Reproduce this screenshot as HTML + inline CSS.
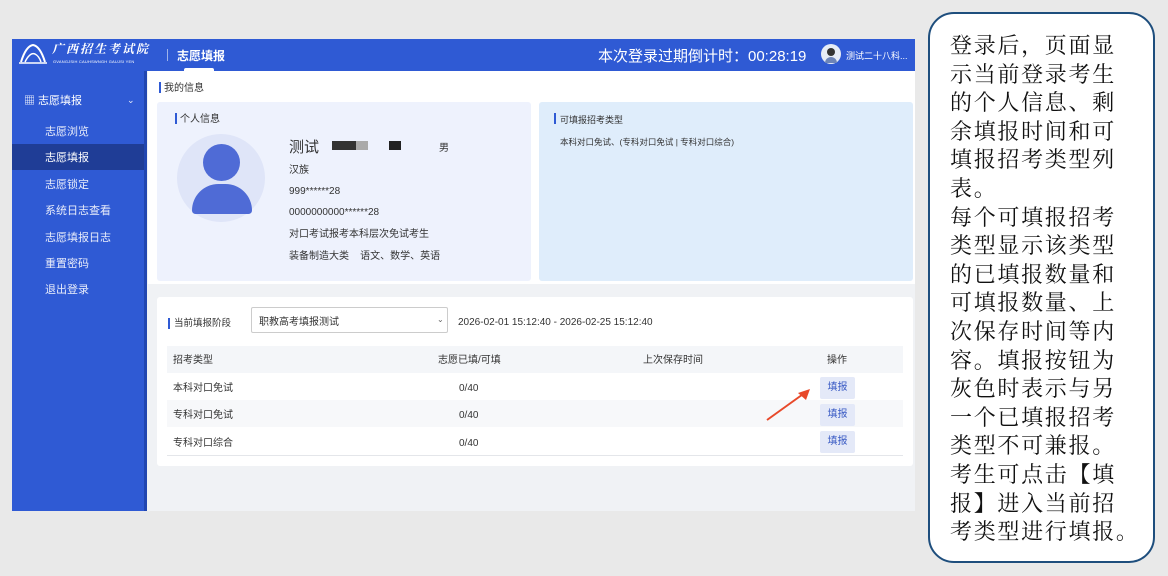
<!DOCTYPE html>
<html><head><meta charset="utf-8"><style>
*{margin:0;padding:0;box-sizing:border-box}
body{width:1168px;height:576px;background:#e9e9e9;position:relative;overflow:hidden;font-family:"Liberation Sans","Noto Sans CJK SC",sans-serif;color:#333}
.abs{position:absolute}
.shot{left:12px;top:39px;width:903px;height:472px;background:#f0f2f5;overflow:hidden}
.hdr{left:0;top:0;width:903px;height:32px;background:#2f5ad4;color:#fff}
.side{left:0;top:32px;width:135px;height:440px;background:#2f5ad4}
.side .strip{left:132px;top:0;width:3px;height:440px;background:#2146b0}
.mi{position:absolute;left:33px;font-size:11px;line-height:12px;color:#e8ecfa;margin-top:1px}
.card{background:#fff}
.t{font-size:10px;line-height:12px;color:#333;position:absolute;white-space:nowrap;margin-top:2px}
.bar{position:absolute;width:2px;height:11px;background:#2f5ad4}
.btn{position:absolute;width:35px;height:22px;background:#e4e9f8;color:#3a5bc4;font-size:10px;text-align:center;line-height:22px;border-radius:2px}
.note{left:928px;top:12px;width:227px;height:551px;border:2px solid #1e4e7d;border-radius:26px;background:#fff}
.note p{position:absolute;left:20px;top:17px;width:205px;white-space:nowrap;font-family:"Noto Serif CJK SC","Liberation Serif",serif;font-size:22px;line-height:28.6px;color:#111;letter-spacing:1.7px}
</style></head><body>
<div class="abs shot">
 <div class="abs hdr">
  <svg class="abs" style="left:6px;top:3px" width="30" height="24" viewBox="0 0 30 24"><path d="M3 20 Q8 4 15 3 Q22 4 27 20" fill="none" stroke="#fff" stroke-width="2"/><path d="M7 20 Q12 10 17 12 Q21 14 23 20" fill="none" stroke="#fff" stroke-width="1.5"/><path d="M1 21 H29" stroke="#fff" stroke-width="1.5"/></svg>
  <div class="abs" style="left:40px;top:3px;font-size:12px;line-height:14px;font-style:italic;font-weight:bold;letter-spacing:2px;font-family:'Noto Serif CJK SC',serif">广西招生考试院</div>
  <div class="abs" style="left:41px;top:20px;font-size:4px;letter-spacing:0.2px">GVANGJSIH CAUHSWNGH GAUJSI YEN</div>
  <div class="abs" style="left:155px;top:10px;width:1px;height:12px;background:#9fb3ea"></div>
  <div class="abs" style="left:165px;top:8px;font-size:12px;font-weight:bold">志愿填报</div>
  <div class="abs" style="left:172px;top:29px;width:30px;height:3px;background:#fff;border-radius:2px 2px 0 0"></div>
  <div class="abs" style="left:586px;top:6px;font-size:15px">本次登录过期倒计时：00:28:19</div>
  <div class="abs" style="left:809px;top:5px;width:20px;height:20px;border-radius:50%;background:#e6ecf6"><div class="abs" style="left:6px;top:4px;width:8px;height:8px;border-radius:50%;background:#333"></div><div class="abs" style="left:4px;top:13px;width:12px;height:6px;border-radius:6px 6px 0 0;background:#6c84b8"></div></div>
  <div class="abs" style="left:834px;top:10px;font-size:9px">测试二十八科...</div>
 </div>
 <div class="abs side">
  <div class="strip abs"></div>
  <div class="mi" style="left:12px;top:23px;color:#fff">&#9638; 志愿填报</div>
  <div class="mi" style="left:115px;top:22px;font-size:9px">&#8964;</div>
  <div class="mi" style="top:54px">志愿浏览</div>
  <div class="abs" style="left:0;top:73px;width:132px;height:26px;background:#1f3d96"></div>
  <div class="mi" style="top:80px;color:#fff">志愿填报</div>
  <div class="mi" style="top:107px">志愿锁定</div>
  <div class="mi" style="top:133px">系统日志查看</div>
  <div class="mi" style="top:160px">志愿填报日志</div>
  <div class="mi" style="top:186px">重置密码</div>
  <div class="mi" style="top:212px">退出登录</div>
 </div>
 <div class="abs card" style="left:136px;top:32px;width:767px;height:213px"></div>
 <div class="bar" style="left:147px;top:43px"></div><div class="t" style="left:152px;top:42px">我的信息</div>
 <div class="abs" style="left:145px;top:63px;width:374px;height:179px;background:#eef2fd;border-radius:3px"></div>
 <div class="bar" style="left:163px;top:74px"></div><div class="t" style="left:168px;top:73px">个人信息</div>
 <div class="abs" style="left:165px;top:95px;width:88px;height:88px;border-radius:50%;background:#dfe5f8"></div>
 <div class="abs" style="left:191px;top:105px;width:37px;height:37px;border-radius:50%;background:#4f6bd6"></div>
 <div class="abs" style="left:180px;top:145px;width:60px;height:30px;border-radius:30px 30px 4px 4px;background:#4f6bd6"></div>
 <div class="t" style="left:277px;top:99px;font-size:15px;line-height:16px">测试</div>
 <div class="abs" style="left:320px;top:102px;width:24px;height:9px;background:#333"></div>
 <div class="abs" style="left:344px;top:102px;width:12px;height:9px;background:#aaa"></div>
 <div class="abs" style="left:377px;top:102px;width:12px;height:9px;background:#222"></div>
 <div class="t" style="left:427px;top:102px">男</div>
 <div class="t" style="left:277px;top:124px">汉族</div>
 <div class="t" style="left:277px;top:145px">999******28</div>
 <div class="t" style="left:277px;top:166px">0000000000******28</div>
 <div class="t" style="left:277px;top:188px">对口考试报考本科层次免试考生</div>
 <div class="t" style="left:277px;top:210px">装备制造大类&nbsp;&nbsp;&nbsp; 语文、数学、英语</div>
 <div class="abs" style="left:527px;top:63px;width:374px;height:179px;background:#dfedfb;border-radius:3px"></div>
 <div class="bar" style="left:542px;top:74px"></div><div class="t" style="left:548px;top:73px;font-size:9px">可填报招考类型</div>
 <div class="t" style="left:548px;top:95px;font-size:8.5px">本科对口免试、(专科对口免试 | 专科对口综合)</div>
 <div class="abs card" style="left:145px;top:258px;width:756px;height:169px;border-radius:3px"></div>
 <div class="bar" style="left:156px;top:279px"></div><div class="t" style="left:162px;top:277px;font-size:9.5px">当前填报阶段</div>
 <div class="abs" style="left:239px;top:268px;width:197px;height:26px;border:1px solid #ccc;border-radius:2px;background:#fff"></div>
 <div class="t" style="left:247px;top:276px">职教高考填报测试</div>
 <div class="t" style="left:425px;top:273px;font-size:8px;color:#666">&#8964;</div>
 <div class="t" style="left:446px;top:276px">2026-02-01 15:12:40 - 2026-02-25 15:12:40</div>
 <div class="abs" style="left:155px;top:307px;width:736px;height:27px;background:#f4f6f9"></div>
 <div class="t" style="left:161px;top:314px">招考类型</div>
 <div class="t" style="left:426px;top:314px">志愿已填/可填</div>
 <div class="t" style="left:631px;top:314px">上次保存时间</div>
 <div class="t" style="left:815px;top:314px">操作</div>
 <div class="abs" style="left:155px;top:361px;width:736px;height:27px;background:#f7f8fa"></div>
 <div class="abs" style="left:155px;top:416px;width:736px;height:1px;background:#e4e6ea"></div>
 <div class="t" style="left:161px;top:342px">本科对口免试</div><div class="t" style="left:447px;top:342px">0/40</div>
 <div class="t" style="left:161px;top:369px">专科对口免试</div><div class="t" style="left:447px;top:369px">0/40</div>
 <div class="t" style="left:161px;top:397px">专科对口综合</div><div class="t" style="left:447px;top:397px">0/40</div>
 <div class="btn" style="left:808px;top:338px">填报</div>
 <div class="btn" style="left:808px;top:365px">填报</div>
 <div class="btn" style="left:808px;top:392px">填报</div>
 <svg class="abs" style="left:750px;top:347px" width="50" height="38" viewBox="0 0 50 38"><path d="M5 34 L44 6" stroke="#e8492a" stroke-width="2"/><path d="M48 3 L36 7 L44 14 Z" fill="#e8492a"/></svg>
</div>
<div class="abs note"><p>登录后，页面显<br>示当前登录考生<br>的个人信息、剩<br>余填报时间和可<br>填报招考类型列<br>表。<br>每个可填报招考<br>类型显示该类型<br>的已填报数量和<br>可填报数量、上<br>次保存时间等内<br>容。填报按钮为<br>灰色时表示与另<br>一个已填报招考<br>类型不可兼报。<br>考生可点击【填<br>报】进入当前招<br>考类型进行填报。</p></div>
</body></html>
